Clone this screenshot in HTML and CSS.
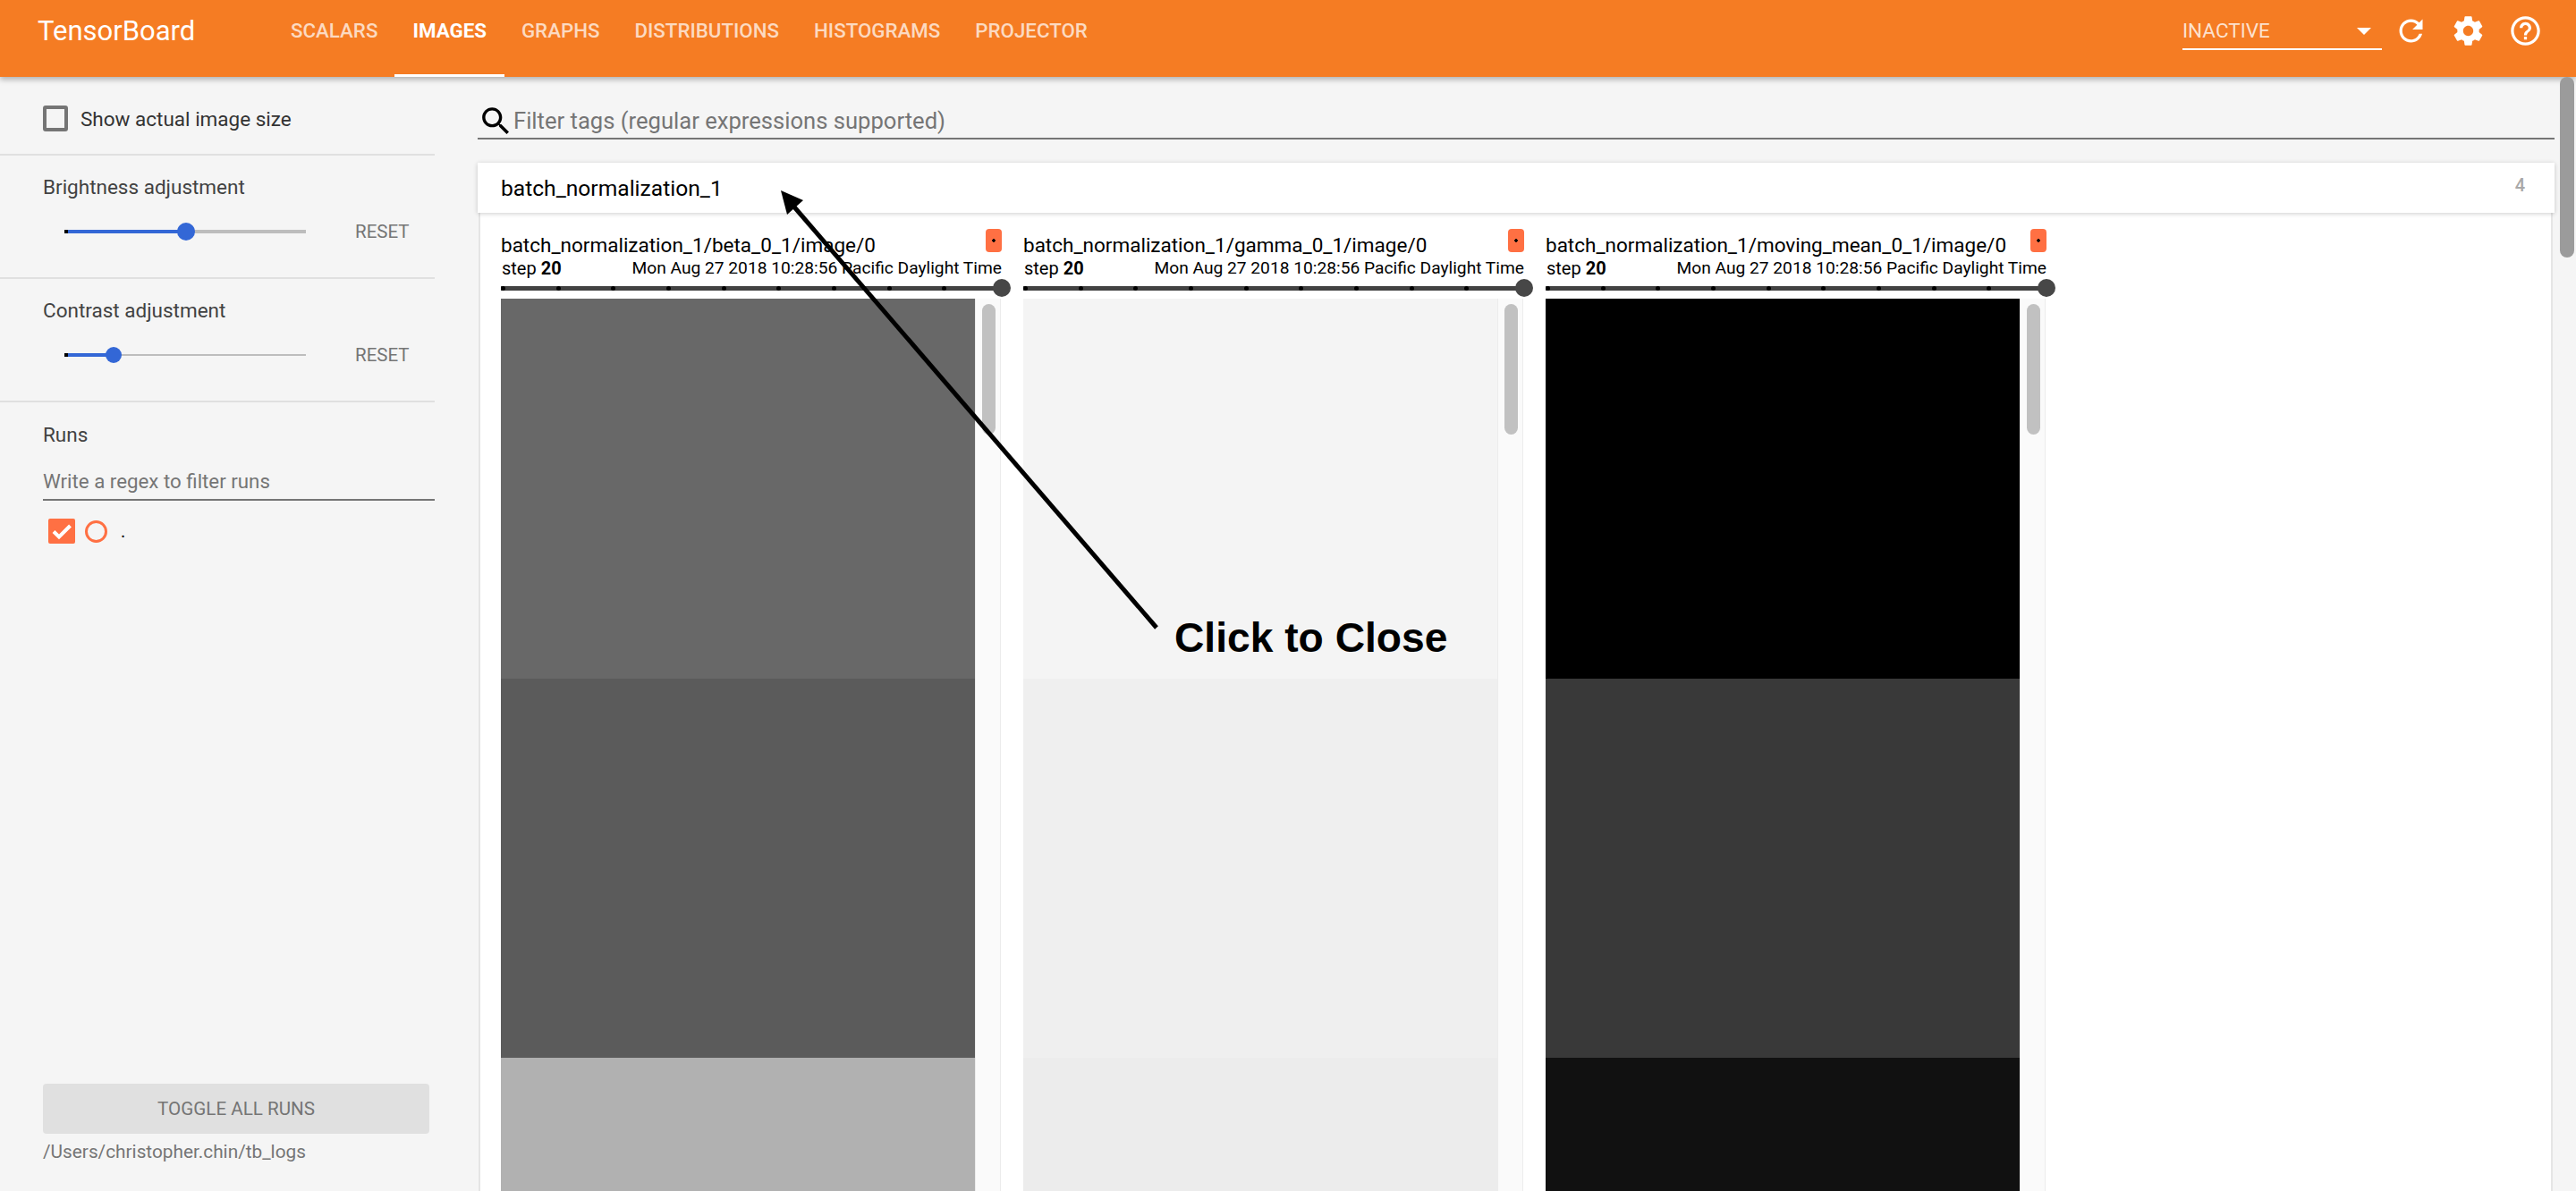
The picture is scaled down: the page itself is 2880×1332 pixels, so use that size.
FILE: index.html
```html
<!doctype html>
<html>
<head>
<title>TensorBoard</title>
<meta charset="utf-8">
<link rel="stylesheet" href="styles.css">
</head>
<body>

<header class="topbar">
  <div class="logo">TensorBoard</div>
  <nav class="tabs">
    <a class="tab">SCALARS</a>
    <a class="tab active">IMAGES</a>
    <a class="tab">GRAPHS</a>
    <a class="tab">DISTRIBUTIONS</a>
    <a class="tab">HISTOGRAMS</a>
    <a class="tab">PROJECTOR</a>
  </nav>
  <div class="inactive">
    <span>INACTIVE</span>
    <i class="caret"></i>
  </div>
  <div class="icons">
    <svg class="icon" viewBox="0 0 24 24"><path d="M17.65 6.35C16.2 4.9 14.21 4 12 4c-4.42 0-7.99 3.58-7.99 8s3.57 8 7.99 8c3.73 0 6.84-2.55 7.73-6h-2.08c-.82 2.33-3.04 4-5.65 4-3.31 0-6-2.69-6-6s2.69-6 6-6c1.66 0 3.14.69 4.22 1.78L13 11h7V4l-2.35 2.35z"/></svg>
    <svg class="icon" viewBox="0 0 24 24"><path d="M19.43 12.98c.04-.32.07-.64.07-.98s-.03-.66-.07-.98l2.11-1.65c.19-.15.24-.42.12-.64l-2-3.46c-.12-.22-.39-.3-.61-.22l-2.49 1c-.52-.4-1.08-.73-1.69-.98l-.38-2.65C14.46 2.18 14.25 2 14 2h-4c-.25 0-.46.18-.49.42l-.38 2.65c-.61.25-1.17.59-1.69.98l-2.49-1c-.23-.09-.49 0-.61.22l-2 3.46c-.13.22-.07.49.12.64l2.11 1.65c-.04.32-.07.65-.07.98s.03.66.07.98l-2.11 1.65c-.19.15-.24.42-.12.64l2 3.46c.12.22.39.3.61.22l2.49-1c.52.4 1.08.73 1.69.98l.38 2.65c.03.24.24.42.49.42h4c.25 0 .46-.18.49-.42l.38-2.65c.61-.25 1.17-.59 1.69-.98l2.49 1c.23.09.49 0 .61-.22l2-3.46c.12-.22.07-.49-.12-.64l-2.11-1.65zM12 15.5c-1.93 0-3.5-1.57-3.5-3.5s1.57-3.5 3.5-3.5 3.5 1.57 3.5 3.5-1.57 3.5-3.5 3.5z"/></svg>
    <svg class="icon" viewBox="0 0 24 24"><path d="M11 18h2v-2h-2v2zm1-16C6.48 2 2 6.48 2 12s4.48 10 10 10 10-4.48 10-10S17.52 2 12 2zm0 18c-4.41 0-8-3.59-8-8s3.59-8 8-8 8 3.59 8 8-3.59 8-8 8zm0-14c-2.21 0-4 1.79-4 4h2c0-1.1.9-2 2-2s2 .9 2 2c0 2-3 1.75-3 5h2c0-2.25 3-2.5 3-5 0-2.21-1.79-4-4-4z"/></svg>
  </div>
</header>

<div class="content">

  <aside class="sidebar">
    <section class="side-sec first">
      <label class="check-row">
        <i class="box"></i>
        <span>Show actual image size</span>
      </label>
    </section>

    <section class="side-sec adjust">
      <div class="side-title">Brightness adjustment</div>
      <div class="slider-row">
        <div class="slider thick">
          <i class="fill fill-b"></i>
          <i class="thumb thumb-b"></i>
        </div>
        <span class="reset">RESET</span>
      </div>
    </section>

    <section class="side-sec adjust">
      <div class="side-title">Contrast adjustment</div>
      <div class="slider-row">
        <div class="slider">
          <i class="fill fill-c"></i>
          <i class="thumb thumb-c"></i>
        </div>
        <span class="reset">RESET</span>
      </div>
    </section>

    <section class="runs">
      <div class="side-title">Runs</div>
      <div class="runs-filter">Write a regex to filter runs</div>
      <div class="run-row">
        <svg class="run-check" viewBox="0 0 30 28"><rect width="30" height="28" rx="2" fill="#ff7043"/><path d="M6 14.5l6 6L24.5 8" fill="none" stroke="#fff" stroke-width="4"/></svg>
        <i class="run-circle"></i>
        <span class="run-name">.</span>
      </div>
      <div class="side-bottom">
        <div class="toggle">TOGGLE ALL RUNS</div>
        <div class="logdir">/Users/christopher.chin/tb_logs</div>
      </div>
    </section>
  </aside>

  <main class="main">
    <div class="search">
      <svg class="search-icon" viewBox="0 0 24 24"><path d="M15.5 14h-.79l-.28-.27C15.41 12.59 16 11.11 16 9.5 16 5.91 13.09 3 9.5 3S3 5.91 3 9.5 5.91 16 9.5 16c1.61 0 3.09-.59 4.23-1.57l.27.28v.79l5 4.99L20.49 19l-4.99-5zm-6 0C7.01 14 5 11.99 5 9.5S7.01 5 9.5 5 14 7.01 14 9.5 11.99 14 9.5 14z"/></svg>
      <span>Filter tags (regular expressions supported)</span>
    </div>

    <div class="tag-head">
      <span class="tag-name">batch_normalization_1</span>
      <span class="tag-count">4</span>
    </div>

    <div class="pane">
      <div class="card">
        <div class="card-title"><span>batch_normalization_1/beta_0_1/image/0</span><i class="pill"></i></div>
        <div class="card-meta"><span>step <b>20</b></span><span class="wall">Mon Aug 27 2018 10:28:56 Pacific Daylight Time</span></div>
        <div class="steps"><i></i><i></i><i></i><i></i><i></i><i></i><i></i><i></i><i></i><i></i><b></b></div>
        <div class="viewer">
          <div class="bands">
            <div class="band a1"></div>
            <div class="band a2"></div>
            <div class="band a3"></div>
          </div>
          <div class="track"><i></i></div>
        </div>
      </div>

      <div class="card">
        <div class="card-title"><span>batch_normalization_1/gamma_0_1/image/0</span><i class="pill"></i></div>
        <div class="card-meta"><span>step <b>20</b></span><span class="wall">Mon Aug 27 2018 10:28:56 Pacific Daylight Time</span></div>
        <div class="steps"><i></i><i></i><i></i><i></i><i></i><i></i><i></i><i></i><i></i><i></i><b></b></div>
        <div class="viewer">
          <div class="bands">
            <div class="band b1"></div>
            <div class="band b2"></div>
            <div class="band b3"></div>
          </div>
          <div class="track"><i></i></div>
        </div>
      </div>

      <div class="card">
        <div class="card-title"><span>batch_normalization_1/moving_mean_0_1/image/0</span><i class="pill"></i></div>
        <div class="card-meta"><span>step <b>20</b></span><span class="wall">Mon Aug 27 2018 10:28:56 Pacific Daylight Time</span></div>
        <div class="steps"><i></i><i></i><i></i><i></i><i></i><i></i><i></i><i></i><i></i><i></i><b></b></div>
        <div class="viewer">
          <div class="bands">
            <div class="band c1"></div>
            <div class="band c2"></div>
            <div class="band c3"></div>
          </div>
          <div class="track"><i></i></div>
        </div>
      </div>
    </div>
  </main>

</div>

<div class="page-scroll"></div>

<!-- annotation drawn over the page -->
<svg class="arrow" viewBox="0 0 2880 1332">
  <path d="M1293 702L885 228" fill="none" stroke="#000" stroke-width="5"/>
  <path d="M873 213L898 224L880 240z" fill="#000"/>
</svg>
<div class="callout">Click to Close</div>

</body>
</html>
```

FILE: styles.css
```css
* {
  box-sizing: border-box;
}

html, body {
  height: 100%;
}

body {
  margin: 0;
  overflow: hidden;
  background-color: #f5f5f5;
  font-family: Roboto, "Liberation Sans", sans-serif;
  color: #212121;
}

i {
  display: block;
}

/* top bar */

.topbar {
  position: relative;
  z-index: 3;
  height: 86px;
  display: flex;
  align-items: flex-start;
  padding-right: 37px;
  background-color: #f57c23;
  box-shadow: 0 3px 6px rgba(0, 0, 0, 0.28);
  color: #fff;
}

.logo {
  width: 305px;
  padding-left: 42px;
  font-size: 31px;
  line-height: 70px;
}

.tabs {
  display: flex;
  flex: 1;
}

.tab {
  height: 86px;
  padding: 0 20px;
  margin-right: -1px;
  font-size: 22.3px;
  font-weight: 500;
  line-height: 68px;
  color: rgba(255, 255, 255, 0.72);
}

.tab.active {
  color: #fff;
  font-weight: 700;
  border-bottom: 3px solid #fff;
}

.inactive {
  width: 223px;
  height: 56px;
  display: flex;
  justify-content: space-between;
  align-items: center;
  padding-top: 14px;
  padding-right: 12px;
  border-bottom: 2px solid #fff;
  font-size: 22.5px;
  color: rgba(255, 255, 255, 0.78);
}

.caret {
  width: 0;
  height: 0;
  margin-top: 2px;
  border-left: 8px solid transparent;
  border-right: 8px solid transparent;
  border-top: 8px solid #fff;
}

.icons {
  display: flex;
  gap: 25px;
  margin-left: 13px;
  padding-top: 15px;
}

.icon {
  width: 39px;
  height: 39px;
  fill: #fff;
}

/* left column */

.content {
  display: flex;
  height: 1246px;
}

.sidebar {
  width: 534px;
  display: flex;
  flex-direction: column;
  flex-shrink: 0;
}

.side-sec {
  height: 138px;
  margin-right: 48px;
  padding-left: 48px;
  border-bottom: 2px solid #e0e0e0;
}

.side-sec.first {
  height: 88px;
  padding-top: 32px;
}

.check-row {
  display: flex;
  align-items: center;
  gap: 14px;
  font-size: 22.5px;
  color: #333;
}

.box {
  width: 28px;
  height: 29px;
  border: 4px solid #757575;
  border-radius: 3px;
}

.side-title {
  padding-top: 20px;
  font-size: 22.5px;
  line-height: 30px;
  color: #424242;
}

.slider-row {
  display: flex;
  align-items: center;
  padding-left: 24px;
  margin-top: 23px;
}

.slider {
  position: relative;
  width: 270px;
  height: 2px;
  background-color: #bdbdbd;
}

.slider.thick {
  height: 4px;
}

.fill {
  position: absolute;
  left: 0;
  top: 50%;
  height: 4px;
  margin-top: -2px;
  background-color: #3367d6;
  border-left: 4px solid #000;
}

.fill-b {
  width: 136px;
}

.fill-c {
  width: 55px;
}

.thumb {
  position: absolute;
  top: 50%;
  border-radius: 50%;
  background-color: #3367d6;
}

.thumb-b {
  left: 126px;
  width: 20px;
  height: 20px;
  margin-top: -10px;
}

.thumb-c {
  left: 46px;
  width: 18px;
  height: 18px;
  margin-top: -9px;
}

.reset {
  margin-left: 55px;
  font-size: 20.5px;
  color: #757575;
}

.runs {
  flex: 1;
  display: flex;
  flex-direction: column;
  padding-top: 1px;
  padding-left: 48px;
  margin-right: 48px;
}

.runs-filter {
  height: 59px;
  padding-top: 24px;
  border-bottom: 2px solid #757575;
  font-size: 22.3px;
  color: #757575;
}

.run-row {
  display: flex;
  align-items: center;
  margin-top: 20px;
  padding-left: 6px;
  font-size: 20px;
}

.run-check {
  width: 30px;
  height: 28px;
}

.run-circle {
  width: 25px;
  height: 25px;
  margin-left: 11px;
  border: 3px solid #ff7043;
  border-radius: 50%;
}

.run-name {
  margin-left: 15px;
  color: #000;
}

.side-bottom {
  margin-top: auto;
  padding-bottom: 34px;
}

.toggle {
  width: 432px;
  height: 56px;
  border-radius: 4px;
  background-color: #e0e0e0;
  color: #757575;
  font-size: 20.6px;
  line-height: 56px;
  text-align: center;
}

.logdir {
  margin-top: 10px;
  font-size: 20.8px;
  line-height: 20px;
  color: #757575;
}

/* main column */

.main {
  flex: 1;
  min-width: 0;
  display: flex;
  flex-direction: column;
  padding-right: 24px;
}

.search {
  height: 70px;
  display: flex;
  align-items: flex-end;
  padding-bottom: 4px;
  border-bottom: 2px solid #757575;
  font-size: 25.6px;
  color: #757575;
}

.search-icon {
  width: 41px;
  height: 41px;
  margin-right: -1px;
  margin-bottom: -6px;
  fill: #000;
}

.tag-head {
  position: relative;
  z-index: 1;
  flex-shrink: 0;
  height: 56px;
  margin-top: 26px;
  display: flex;
  justify-content: space-between;
  align-items: center;
  padding: 0 33px 0 26px;
  background-color: #fff;
  box-shadow: 0 1px 5px rgba(0, 0, 0, 0.2);
}

.tag-name {
  font-size: 24.6px;
  color: #000;
}

.tag-count {
  padding-bottom: 6px;
  font-size: 20px;
  font-weight: 500;
  color: #a8a8a8;
}

.pane {
  flex: 1;
  display: flex;
  gap: 24px;
  overflow: hidden;
  margin: 0 2px 0 1px;
  padding: 18px 0 0 23px;
  background-color: #fff;
  border-left: 2px solid #e5e5e5;
  border-right: 2px solid #e5e5e5;
}

.card {
  width: 560px;
  flex-shrink: 0;
  color: #000;
}

.card-title {
  height: 26px;
  display: flex;
  justify-content: space-between;
  font-size: 22.5px;
  line-height: 36px;
}

.pill {
  width: 18px;
  height: 26px;
  border-radius: 4px;
  background: radial-gradient(circle at 50% 50%, #000 1.5px, #ff7043 2px);
}

.card-meta {
  height: 30px;
  display: flex;
  justify-content: space-between;
  padding-left: 1px;
  font-size: 20px;
  line-height: 36px;
}

.wall {
  font-size: 19.2px;
}

.steps {
  position: relative;
  height: 5px;
  margin-top: 8px;
  display: flex;
  justify-content: space-between;
  align-items: center;
  background-color: #424242;
}

.steps i {
  width: 5px;
  height: 5px;
  border-radius: 50%;
  background-color: #000;
}

.steps b {
  position: absolute;
  right: -10px;
  top: -8px;
  width: 20px;
  height: 20px;
  border-radius: 50%;
  background-color: #474747;
}

.viewer {
  display: flex;
  margin-top: 9px;
}

.bands {
  width: 530px;
  flex-shrink: 0;
}

.band {
  height: 424.5px;
}

.a1 { background-color: #686868; }
.a2 { background-color: #5b5b5b; }
.a3 { background-color: #b1b1b1; }
.b1 { background-color: #f4f4f4; }
.b2 { background-color: #efefef; }
.b3 { background-color: #ececec; }
.c1 { background-color: #000000; }
.c2 { background-color: #393939; }
.c3 { background-color: #111111; }

.track {
  width: 29px;
  height: 1000px;
  padding: 6px 5px 0 7px;
  background-color: #fafafa;
  border-left: 1px solid #ececec;
  border-right: 1px solid #ececec;
}

.track i {
  height: 146px;
  border-radius: 8px;
  background-color: #c1c1c1;
}

/* window scrollbar and annotation, both on top of the page */

.page-scroll {
  position: absolute;
  z-index: 4;
  left: 2862px;
  top: 86px;
  width: 16px;
  height: 202px;
  border-radius: 8px;
  background-color: #9b9b9b;
}

.arrow {
  position: absolute;
  z-index: 5;
  left: 0;
  top: 0;
  width: 2880px;
  height: 1332px;
  pointer-events: none;
}

.callout {
  position: absolute;
  z-index: 5;
  left: 1313px;
  top: 686px;
  font-family: "Liberation Sans", Arial, sans-serif;
  font-size: 46.2px;
  font-weight: 700;
  line-height: 54px;
  white-space: nowrap;
  color: #000;
}
```
